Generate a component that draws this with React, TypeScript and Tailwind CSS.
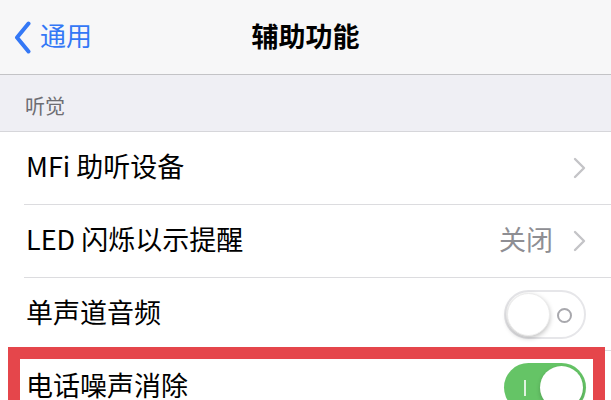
const font = { fontFamily: '"Noto Sans CJK SC", "Noto Sans", sans-serif' };

function Chevron() {
  return (
    <svg width="13" height="22" viewBox="0 0 13 22" fill="none">
      <path d="M2 2l9 9-9 9" stroke="#c4c4c7" strokeWidth="2.4" strokeLinecap="round" strokeLinejoin="round" />
    </svg>
  );
}

function Toggle({ on }: { on: boolean }) {
  if (on) {
    return (
      <div className="relative w-[82px] h-[49px] rounded-full bg-[#65c466] flex items-center justify-end p-[3px]">
        <div className="absolute left-[20px] top-[17px] w-[2px] h-[16px] bg-white/80" />
        <div className="w-[43px] h-[43px] rounded-full bg-white shadow-[0_2px_4px_rgba(0,0,0,0.2)]" />
      </div>
    );
  }
  return (
    <div className="relative w-[82px] h-[49px] rounded-full bg-white border-2 border-[#e6e6e9] flex items-center p-[1px]">
      <div className="absolute right-[12px] top-[16px] w-[15px] h-[15px] rounded-full border-2 border-[#a8a8ad]" />
      <div className="w-[43px] h-[43px] rounded-full bg-white shadow-[0_2px_5px_rgba(0,0,0,0.25)] border border-[#ececec]" />
    </div>
  );
}

function Row({ label, value, right, divider = true }: { label: string; value?: string; right: React.ReactNode; divider?: boolean }) {
  return (
    <div className={`ml-[24px] ${divider ? "border-b border-[#dcdcdf]" : ""}`}>
      <div className="h-[72px] flex items-center pl-[2px] pr-[25px]">
        <span className="flex-1 text-[27px] text-black leading-none pb-[6px]">{label}</span>
        <div className="flex items-center gap-[20px]">
          {value && <span className="text-[27px] text-[#8e8e93] leading-none pb-[6px]">{value}</span>}
          {right}
        </div>
      </div>
    </div>
  );
}

export default function App() {
  return (
    <div className="relative w-[611px] h-[400px] overflow-hidden bg-white" style={font}>
      {/* Nav bar */}
      <div className="h-[75px] bg-[#f7f7f8] border-b border-[#c3c3c6] grid grid-cols-[1fr_auto_1fr] items-center">
        <div className="flex items-center pl-[14px] gap-[9px]">
          <svg width="17" height="33" viewBox="0 0 17 33" fill="none">
            <path d="M14.5 2.5L3 16.5l11.5 14" stroke="#3478f6" strokeWidth="4" strokeLinecap="round" strokeLinejoin="round" />
          </svg>
          <span className="text-[26px] text-[#3478f6] leading-none pb-[4px]">通用</span>
        </div>
        <span className="text-[27px] font-semibold text-black leading-none pb-[4px]">辅助功能</span>
        <div />
      </div>

      {/* Section header */}
      <div className="h-[57px] bg-[#efeff4] border-b border-[#d6d6da] flex items-center pl-[25px] pt-[6px]">
        <span className="text-[20px] text-[#6d6d72] leading-none">听觉</span>
      </div>

      {/* List */}
      <div className="bg-white">
        <Row label="MFi 助听设备" right={<Chevron />} />
        <Row label="LED 闪烁以示提醒" value="关闭" right={<Chevron />} />
        <Row label="单声道音频" right={<Toggle on={false} />} />
        <Row label="电话噪声消除" right={<Toggle on />} divider={false} />
      </div>

      {/* Red annotation box */}
      <div className="absolute left-[8px] top-[347px] w-[597px] h-[80px] border-[12px] border-[#e5464b]" />
    </div>
  );
}
